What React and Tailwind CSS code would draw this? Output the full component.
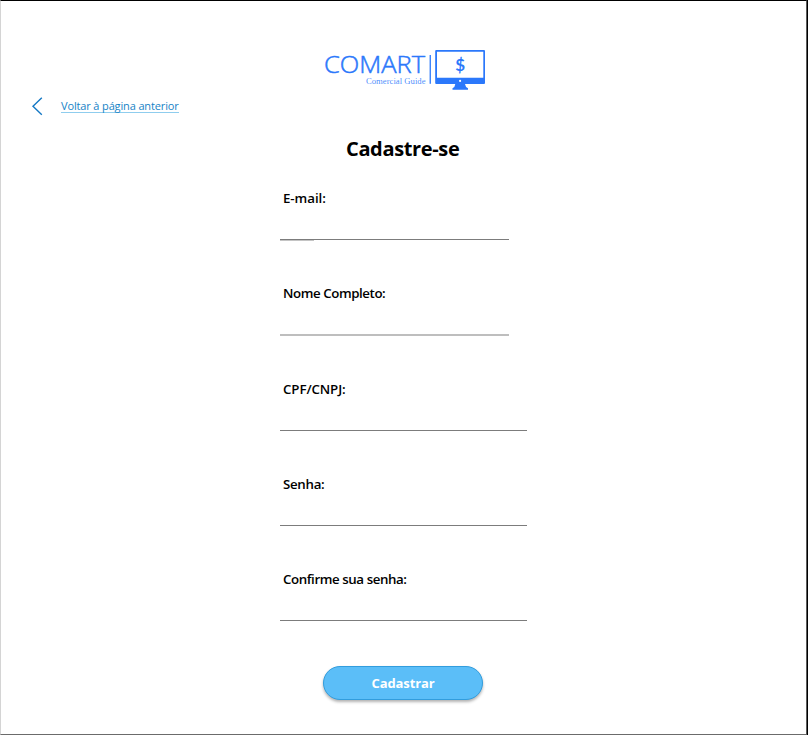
const fields = [
  { label: "E-mail:", name: "email", type: "email", text: "tracking-[-0.05px]", line: "w-[229px] bg-[#7c7c7c] h-px", accent: true },
  { label: "Nome Completo:", name: "nome", type: "text", text: "tracking-[-0.42px]", line: "w-[229px] bg-[#bebebe] h-[2px]" },
  { label: "CPF/CNPJ:", name: "documento", type: "text", text: "tracking-[-0.1px]", line: "w-[247px] bg-[#7c7c7c] h-px" },
  { label: "Senha:", name: "senha", type: "password", text: "tracking-[-0.3px]", line: "w-[247px] bg-[#7c7c7c] h-px" },
  { label: "Confirme sua senha:", name: "confirma", type: "password", text: "tracking-[-0.42px]", line: "w-[247px] bg-[#7c7c7c] h-px" },
];

function Logo() {
  return (
    <svg width="180" height="60" viewBox="0 0 180 60" fill="#2b78fb" role="img" aria-label="COMART Comercial Guide">
      <text x="9" y="33.2" fontSize="24.3" fontWeight="300" textLength="101" lengthAdjust="spacingAndGlyphs" stroke="#2b78fb" strokeWidth="0.5" fontFamily="'Open Sans', sans-serif">COMART</text>
      <text x="51" y="43.8" fontSize="8" textLength="59.5" lengthAdjust="spacingAndGlyphs" fillOpacity="0.85" fontFamily="'Liberation Serif', serif">Comercial Guide</text>
      <rect x="114.6" y="15" width="1.3" height="28.8" />
      <path fillRule="evenodd" d="M121.2 10H169Q170 10 170 11V43Q170 44 169 44H121.2Q120.2 44 120.2 43V11Q120.2 10 121.2 10ZM122 11.8V37.8H168.3V11.8ZM145.1 39.8A1.1 1.1 0 1 0 145.1 42A1.1 1.1 0 1 0 145.1 39.8Z" />
      <path d="M140.3 44H150Q150.4 47.3 153 48.3V49.8H137.5V48.3Q140 47.3 140.3 44Z" />
      <text x="145.1" y="30.5" fontSize="17" fontWeight="700" textAnchor="middle" fontFamily="Lato, sans-serif">$</text>
    </svg>
  );
}

function Field({ field }) {
  return (
    <label className="flex h-[95.3px] flex-col">
      <span className={`ml-[3px] h-5 text-[13.3px] leading-5 font-semibold whitespace-nowrap text-black ${field.text}`}>{field.label}</span>
      <input name={field.name} type={field.type} className="ml-[3px] h-[31px] w-[220px] text-[13px] outline-none" />
      <span className={`block shrink-0 ${field.line}`} />
      {field.accent && <span className="block h-px w-[34px] shrink-0 bg-[#c4c4c4]" />}
    </label>
  );
}

export default function App() {
  return (
    <div className="flex h-[735px] w-[808px] border-r border-black bg-white font-['Open_Sans',sans-serif]">
      <main className="flex w-full flex-col overflow-hidden border border-t-black border-r-[#5c5c5c] border-b-[#6b6b6b] border-l-[#d4d4d4]">
        <header className="ml-[314px] mt-[39px] h-[54px] w-[180px]">
          <Logo />
        </header>
        <a href="#" className="ml-[30px] flex h-6 items-center self-start text-[#1683c6]">
          <svg width="12" height="20" viewBox="0 0 12 20" fill="none" stroke="#1478c4" strokeWidth="1.4">
            <path d="M10.8 1.7L2 10.3L10.8 18.7" />
          </svg>
          <span className="ml-[18px] mt-px border-b border-[#8fcdee] text-[11px] leading-[12px] tracking-[-0.14px] whitespace-nowrap">Voltar à página anterior</span>
        </a>
        <h1 className="ml-[345px] mt-[16px] h-[30px] text-[20px] leading-[30px] font-bold tracking-[-0.35px] text-black">Cadastre-se</h1>
        <form className="ml-[279px] mt-[24px] flex flex-col" onSubmit={(e) => e.preventDefault()}>
          {fields.map((f) => <Field key={f.name} field={f} />)}
          <button className="ml-[43px] mt-0.5 flex h-[34px] w-[160px] items-center justify-center rounded-full border border-[#329ddd] bg-[#5bbef8] text-[13px] font-bold tracking-[-0.1px] text-white shadow-[0_2px_3px_rgba(0,0,0,0.3)]">Cadastrar</button>
        </form>
      </main>
    </div>
  );
}
